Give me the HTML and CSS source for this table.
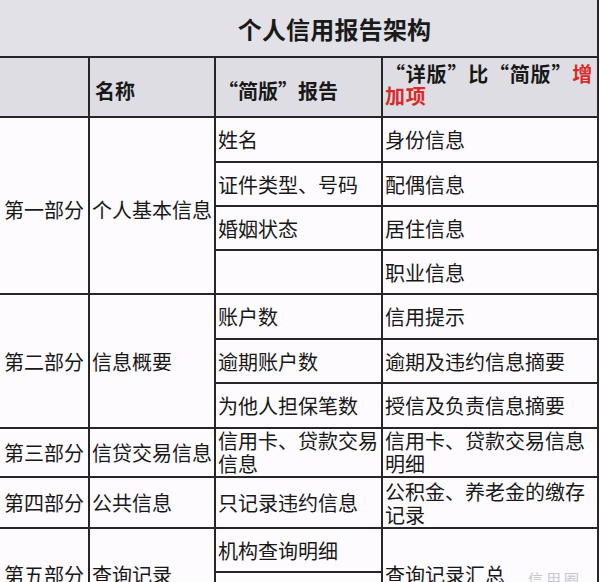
FILE: index.html
```html
<!DOCTYPE html>
<html lang="zh-CN">
<head>
<meta charset="utf-8">
<title>个人信用报告架构</title>
<link rel="stylesheet" href="styles.css">
</head>
<body>
<div class="sheet">
  <div class="title">个人信用报告架构</div>
  <div class="grid">
    <div class="cell head c1"></div>
    <div class="cell head c2">名称</div>
    <div class="cell head c3">“简版”报告</div>
    <div class="cell head c4"><p class="headtext">“详版”比“简版”<span class="red">增加项</span></p></div>

    <div class="cell c1 s1">第一部分</div>
    <div class="cell c2 s1">个人基本信息</div>
    <div class="cell c3">姓名</div>
    <div class="cell c4">身份信息</div>
    <div class="cell c3">证件类型、号码</div>
    <div class="cell c4">配偶信息</div>
    <div class="cell c3">婚姻状态</div>
    <div class="cell c4">居住信息</div>
    <div class="cell c3"></div>
    <div class="cell c4">职业信息</div>

    <div class="cell c1 s2">第二部分</div>
    <div class="cell c2 s2">信息概要</div>
    <div class="cell c3">账户数</div>
    <div class="cell c4">信用提示</div>
    <div class="cell c3">逾期账户数</div>
    <div class="cell c4">逾期及违约信息摘要</div>
    <div class="cell c3">为他人担保笔数</div>
    <div class="cell c4">授信及负责信息摘要</div>

    <div class="cell c1">第三部分</div>
    <div class="cell c2">信贷交易信息</div>
    <div class="cell c3 tight">信用卡、贷款交易信息</div>
    <div class="cell c4 tight">信用卡、贷款交易信息明细</div>

    <div class="cell c1">第四部分</div>
    <div class="cell c2">公共信息</div>
    <div class="cell c3">只记录违约信息</div>
    <div class="cell c4 tight">公积金、养老金的缴存记录</div>

    <div class="cell c1 s5">第五部分</div>
    <div class="cell c2 s5">查询记录</div>
    <div class="cell c3">机构查询明细</div>
    <div class="cell c4 s5">查询记录汇总</div>
    <div class="cell c3"></div>
  </div>
  <div class="watermark">信用圈</div>
</div>
</body>
</html>
```

FILE: styles.css
```css
html, body {
  margin: 0;
  padding: 0;
  background: #fdfbfd;
  overflow: hidden;
}

body {
  font-family: "Noto Sans CJK SC", "Noto Sans", sans-serif;
  color: #181818;
}

.sheet {
  position: relative;
  width: 599px;
  height: 582px;
  overflow: hidden;
}

.title {
  box-sizing: border-box;
  height: 58px;
  padding-left: 72px;
  display: flex;
  align-items: center;
  justify-content: center;
  font-size: 24px;
  font-weight: 700;
  letter-spacing: 0.2px;
  color: #1a1a1a;
  background: #e2e1e7;
  border-right: 2px solid #262626;
  border-bottom: 2px solid #262626;
}

.grid {
  display: grid;
  grid-template-columns: 90px 126px 167px 216px;
  grid-template-rows: 60px 45px 44px 44px 44px 45px 44px 45px 49px 51px 44px 44px;
}

.cell {
  box-sizing: border-box;
  display: flex;
  align-items: center;
  border-right: 2px solid #262626;
  border-bottom: 2px solid #262626;
  font-size: 20px;
  line-height: 23px;
  padding: 0 0 0 2px;
  background: #fdfbfd;
}

.cell.c1 { grid-column: 1; padding-left: 4px; }
.cell.c2 { grid-column: 2; padding-left: 2px; }
.cell.c3 { grid-column: 3; }
.cell.c4 { grid-column: 4; }

.cell.s1 { grid-row: span 4; padding-top: 8px; }
.cell.s2 { grid-row: span 3; }
.cell.s5 { grid-row: span 2; padding-top: 4px; }

.cell.tight { align-items: flex-end; padding-bottom: 1px; }

.head {
  background: #dedde3;
  font-weight: 700;
  padding-top: 6px;
}

.head.c2 { padding-left: 5px; }

.head.c4 {
  padding-top: 0;
  padding-bottom: 4px;
}

.headtext {
  margin: 0;
  line-height: 22px;
  letter-spacing: 0.8px;
}

.red {
  color: #d62b2b;
}

.watermark {
  position: absolute;
  left: 528px;
  top: 568px;
  font-size: 15px;
  color: #c9c8cc;
  letter-spacing: 3px;
}
```
